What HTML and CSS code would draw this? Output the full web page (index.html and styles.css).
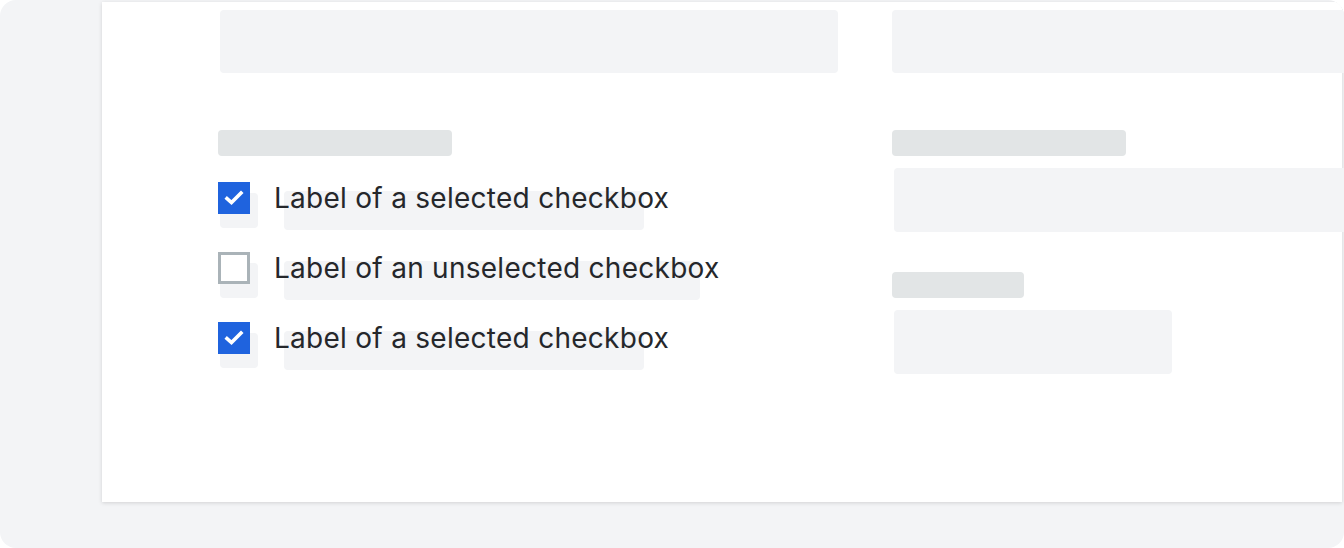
FILE: index.html
```html
<!DOCTYPE html>
<html>
<head>
<meta charset="utf-8">
<link rel="stylesheet" href="styles.css">
</head>
<body>
<div class="frame">
  <div class="card">
    <div class="grid">
      <div class="col left">
        <div class="field wide"></div>
        <div class="label-sk l1"></div>
        <div class="rows">
          <div class="row">
            <span class="sk-box"></span>
            <span class="sk-text s1"></span>
            <span class="cb checked"><svg viewBox="0 0 32 32" width="32" height="32"><polyline points="9,16.5 13.5,20.5 23,11" fill="none" stroke="#fff" stroke-width="3.6" stroke-linecap="square"/></svg></span>
            <span class="text">Label of a selected checkbox</span>
          </div>
          <div class="row">
            <span class="sk-box"></span>
            <span class="sk-text s2"></span>
            <span class="cb"></span>
            <span class="text">Label of an unselected checkbox</span>
          </div>
          <div class="row">
            <span class="sk-box"></span>
            <span class="sk-text s1"></span>
            <span class="cb checked"><svg viewBox="0 0 32 32" width="32" height="32"><polyline points="9,16.5 13.5,20.5 23,11" fill="none" stroke="#fff" stroke-width="3.6" stroke-linecap="square"/></svg></span>
            <span class="text">Label of a selected checkbox</span>
          </div>
        </div>
      </div>
      <div class="col right">
        <div class="field full"></div>
        <div class="label-sk l1"></div>
        <div class="field full inset"></div>
        <div class="label-sk l2"></div>
        <div class="field small inset"></div>
      </div>
    </div>
  </div>
</div>
</body>
</html>
```

FILE: styles.css
```css
html, body {
  margin: 0;
  padding: 0;
  background: #ffffff;
}
body {
  width: 1344px;
  height: 548px;
  overflow: hidden;
  font-family: Inter, "Noto Sans", sans-serif;
}
.frame {
  box-sizing: border-box;
  width: 1344px;
  height: 548px;
  background: #f3f4f6;
  border-radius: 16px;
  overflow: hidden;
  padding: 2px 2px 0 102px;
}
.card {
  height: 500px;
  background: #ffffff;
  box-shadow: 0 1px 4px rgba(0, 0, 0, 0.14);
  padding: 8px 0 0 116px;
  box-sizing: border-box;
}
.grid {
  display: grid;
  grid-template-columns: 620px 460px;
  column-gap: 54px;
}
.col {
  display: flex;
  flex-direction: column;
  align-items: flex-start;
}
.field {
  background: #f3f4f6;
  border-radius: 4px;
  height: 63px;
}
.field.wide {
  width: 618px;
  margin-left: 2px;
}
.field.full {
  width: 460px;
  border-radius: 4px 0 0 4px;
}
.field.inset {
  margin-left: 2px;
  height: 64px;
  margin-top: 12px;
}
.field.small {
  width: 278px;
  border-radius: 4px;
}
.label-sk {
  background: #e2e5e6;
  border-radius: 4px;
  height: 26px;
}
.label-sk.l1 {
  width: 234px;
  margin-top: 57px;
}
.label-sk.l2 {
  width: 132px;
  margin-top: 40px;
}
.rows {
  margin-top: 26px;
  display: flex;
  flex-direction: column;
}
.row {
  position: relative;
  height: 70px;
  display: flex;
  align-items: flex-start;
  gap: 24px;
}
.sk-box {
  position: absolute;
  left: 2px;
  top: 11px;
  width: 38px;
  height: 35px;
  background: #f3f4f6;
  border-radius: 4px;
}
.sk-text {
  position: absolute;
  left: 66px;
  top: 9px;
  height: 39px;
  background: #f3f4f6;
  border-radius: 4px;
}
.sk-text.s1 { width: 360px; }
.sk-text.s2 { width: 416px; }
.cb {
  position: relative;
  box-sizing: border-box;
  width: 32px;
  height: 32px;
  background: #ffffff;
  border: 3px solid #aab3b8;
  flex: none;
}
.cb.checked {
  background: #1f63de;
  border: none;
}
.cb svg {
  display: block;
}
.text {
  position: relative;
  font-size: 28px;
  line-height: 32px;
  color: #25272b;
  letter-spacing: 0.27px;
  white-space: nowrap;
}
```
